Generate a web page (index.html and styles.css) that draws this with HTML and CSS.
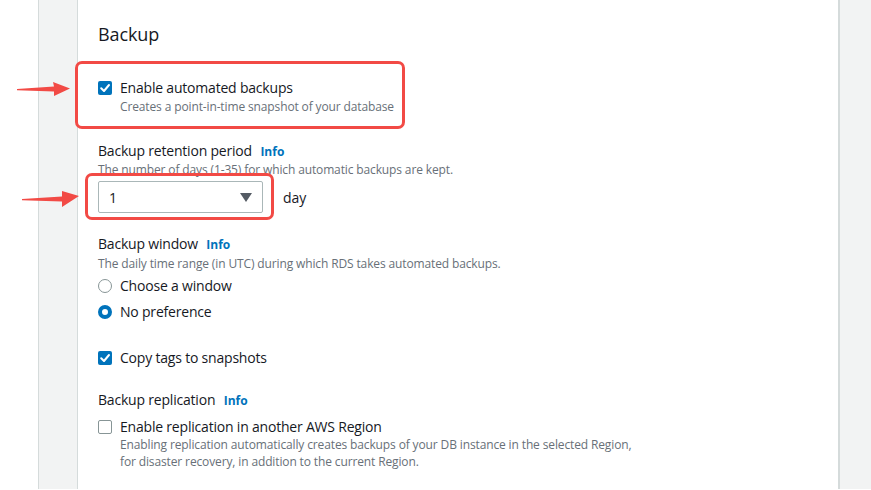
FILE: index.html
```html
<!DOCTYPE html>
<html>
<head>
<meta charset="utf-8">
<link rel="stylesheet" href="styles.css">
</head>
<body>
<div class="page">
  <div class="gutter"></div>
  <div class="band"></div>
  <main class="card">
    <h2 class="title">Backup</h2>

    <div class="option first">
      <span class="checkbox checked"><svg viewBox="0 0 14 14" width="14" height="14"><path d="M3.2 7.2 L6 10 L11 4" fill="none" stroke="#fff" stroke-width="2" stroke-linecap="round" stroke-linejoin="round"/></svg></span>
      <div class="option-text">
        <div class="label">Enable automated backups</div>
        <div class="desc">Creates a point-in-time snapshot of your database</div>
      </div>
    </div>

    <div class="field retention">
      <div class="label">Backup retention period <a class="info">Info</a></div>
      <div class="desc">The number of days (1-35) for which automatic backups are kept.</div>
      <div class="select-row">
        <div class="select"><span>1</span><svg class="caret" viewBox="0 0 12 9" width="12" height="9"><path d="M0 0 H12 L6 9 Z" fill="#545b64"/></svg></div>
        <span class="unit">day</span>
      </div>
    </div>

    <div class="field window">
      <div class="label">Backup window <a class="info">Info</a></div>
      <div class="desc">The daily time range (in UTC) during which RDS takes automated backups.</div>
      <div class="radio-row r1"><span class="radio"></span><span class="label">Choose a window</span></div>
      <div class="radio-row r2"><span class="radio on"></span><span class="label">No preference</span></div>
    </div>

    <div class="option tags">
      <span class="checkbox checked"><svg viewBox="0 0 14 14" width="14" height="14"><path d="M3.2 7.2 L6 10 L11 4" fill="none" stroke="#fff" stroke-width="2" stroke-linecap="round" stroke-linejoin="round"/></svg></span>
      <div class="option-text"><div class="label">Copy tags to snapshots</div></div>
    </div>

    <div class="field replication">
      <div class="label">Backup replication <a class="info">Info</a></div>
      <div class="option repl">
        <span class="checkbox"></span>
        <div class="option-text">
          <div class="label">Enable replication in another AWS Region</div>
          <div class="desc multi">Enabling replication automatically creates backups of your DB instance in the selected Region,<br>for disaster recovery, in addition to the current Region.</div>
        </div>
      </div>
    </div>
  </main>
  <div class="side"></div>

  <div class="mark mark1"></div>
  <div class="mark mark2"></div>
  <svg class="arrow arrow1" width="60" height="20" viewBox="0 0 60 20"><polygon points="0,9 37,6.5 36,2 53,8.5 37,16 37,11.5 0,10.2" fill="#f24a45"/></svg>
  <svg class="arrow arrow2" width="64" height="20" viewBox="0 0 64 20"><polygon points="0,11 40,8.5 40,3 57,8 40,19 40,13.5 0,12.3" fill="#f24a45"/></svg>
</div>
</body>
</html>
```
FILE: styles.css
```css
* { box-sizing: border-box; }
html, body { margin: 0; padding: 0; background: #fff; }
body { font-family: "Open Sans", "Noto Sans", Arial, sans-serif; color: #16191f; }
.page { position: relative; display: flex; width: 871px; height: 490px; overflow: hidden; }
.gutter { width: 38px; height: 489px; background: #fff; }
.band { width: 40px; height: 489px; background: #f2f3f3; border-left: 1px solid #d5dbdb; border-right: 1px solid #d5dbdb; }
.card { width: 760px; height: 490px; padding: 22px 20px 0 20px; background: #fff; }
.side { flex: 1; height: 489px; background: #f2f3f3; border-left: 2px solid #d5dbdb; }

.title { margin: 0; font-size: 18px; line-height: 24px; font-weight: 400; letter-spacing: -0.1px; }
.label { font-size: 14px; line-height: 20px; letter-spacing: -0.2px; }
.desc { font-size: 12px; line-height: 16px; color: #687078; letter-spacing: -0.13px; }
.info { color: #0073bb; font-weight: 700; font-size: 12px; margin-left: 5px; letter-spacing: 0; }

.option { display: flex; gap: 8px; align-items: flex-start; }
.option.first { margin-top: 32px; }
.option.first .desc { line-height: 17px; }
.checkbox { flex: none; width: 14px; height: 14px; margin-top: 3px; border-radius: 2px; border: 1.5px solid #879596; background: #fff; display: flex; }
.checkbox.checked { background: #0073bb; border: none; }

.retention { margin-top: 26px; }
.select-row { display: flex; align-items: center; gap: 20px; margin-top: 3px; }
.select { width: 165px; height: 32px; border: 1px solid #aab7b8; border-radius: 2px; display: flex; align-items: center; justify-content: space-between; padding: 0 10px 0 10px; font-size: 14px; }
.unit { font-size: 14px; }

.window { margin-top: 21px; }
.window .desc { margin-top: 1px; }
.radio-row { display: flex; align-items: center; gap: 8px; }
.r1 { margin-top: 4px; }
.r2 { margin-top: 6px; }
.radio { width: 14px; height: 14px; border-radius: 50%; border: 1.5px solid #879596; background: #fff; }
.radio.on { border: 4px solid #0073bb; }

.tags { margin-top: 26px; }
.replication { margin-top: 22px; }
.repl { margin-top: 6px; }
.desc.multi { line-height: 17px; margin-top: -1px; }

.mark { position: absolute; border: 3px solid #f24a45; border-radius: 7px; }
.mark1 { left: 75px; top: 61px; width: 330px; height: 68px; }
.mark2 { left: 85px; top: 173px; width: 189px; height: 47px; }
.arrow { position: absolute; }
.arrow1 { left: 17px; top: 80px; }
.arrow2 { left: 22px; top: 188px; }
```
